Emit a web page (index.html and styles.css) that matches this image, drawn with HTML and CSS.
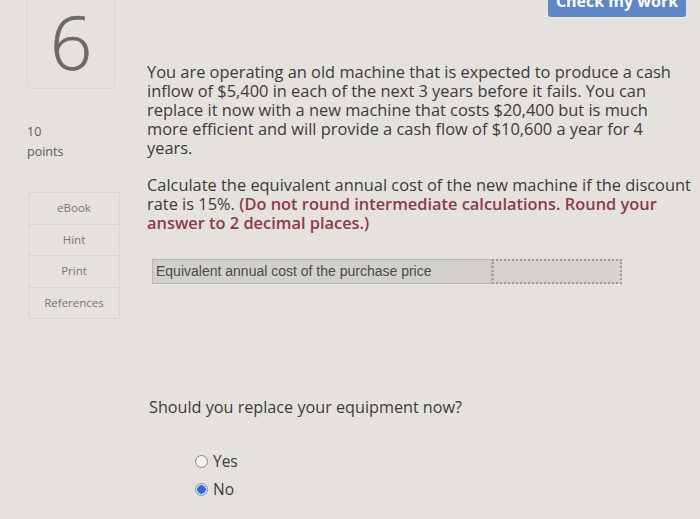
FILE: index.html
```html
<!DOCTYPE html>
<html lang="en">
<head>
<meta charset="utf-8">
<link rel="stylesheet" href="styles.css">
</head>
<body>
<div class="topbar">
  <button class="check-btn">Check my work</button>
</div>
<div class="page">
  <aside class="sidebar">
    <div class="qnum">6</div>
    <div class="points">
      <div class="points-val">10</div>
      <div class="points-lbl">points</div>
    </div>
    <ul class="tools">
      <li>eBook</li>
      <li>Hint</li>
      <li>Print</li>
      <li>References</li>
    </ul>
  </aside>
  <main class="content">
    <p class="para">You are operating an old machine that is expected to produce a cash inflow of $5,400 in each of the next 3 years before it fails. You can replace it now with a new machine that costs $20,400 but is much more efficient and will provide a cash flow of $10,600 a year for 4 years.</p>
    <p class="para">Calculate the equivalent annual cost of the new machine if the discount rate is 15%. <strong class="note">(Do not round intermediate calculations. Round your answer to 2 decimal places.)</strong></p>
    <div class="answer-row">
      <div class="answer-label">Equivalent annual cost of the purchase price</div>
      <div class="answer-input"></div>
    </div>
    <p class="question">Should you replace your equipment now?</p>
    <div class="options">
      <label class="opt"><span class="radio"></span>Yes</label>
      <label class="opt"><span class="radio checked"></span>No</label>
    </div>
  </main>
</div>
</body>
</html>
```

FILE: styles.css
```css
html, body {
  margin: 0;
  padding: 0;
}
body {
  width: 700px;
  height: 519px;
  overflow: hidden;
  background: #e5e2dd;
  font-family: "Open Sans", "Lato", sans-serif;
  color: #3b3b3b;
}
.topbar {
  display: flex;
  justify-content: flex-end;
  padding-right: 14px;
  height: 0;
}
.check-btn {
  margin-top: -16px;
  width: 138px;
  height: 33px;
  border: none;
  border-radius: 3px;
  background: #5d87c6;
  color: #fff;
  font-family: "Open Sans", sans-serif;
  font-weight: 700;
  font-size: 16px;
  line-height: 28px;
  padding: 0;
}
.page {
  display: flex;
}
.sidebar {
  width: 120px;
  flex: none;
  padding-left: 27px;
}
.qnum {
  width: 88px;
  height: 89px;
  box-sizing: border-box;
  border: 1px solid #d8d5d0;
  border-top: none;
  border-radius: 0 0 5px 5px;
  font-size: 74px;
  font-weight: 300;
  color: #6a6a6a;
  text-align: center;
  line-height: 80px;
  padding-top: 2px;
  -webkit-text-stroke: 0.6px #6a6a6a;
}
.points {
  margin-top: 33px;
  font-size: 12.5px;
  color: #5a5a5a;
  line-height: 20px;
}
.tools {
  list-style: none;
  margin: 30px 0 0 1px;
  padding: 0;
  width: 90px;
  border: 1px solid #d8d5d0;
  border-radius: 2px;
}
.tools li {
  height: 30.5px;
  line-height: 30.5px;
  text-align: center;
  font-size: 11.5px;
  color: #757575;
  border-bottom: 1px solid #d8d5d0;
}
.tools li:last-child {
  border-bottom: none;
}
.content {
  flex: 1;
  padding-top: 62px;
}
.para {
  margin: 0 0 18px 0;
  font-size: 16.4px;
  line-height: 19px;
  width: 545px;
}
.note {
  color: #8e3a48;
  font-weight: 600;
}
.answer-row {
  display: flex;
  margin: 27px 0 0 5px;
  width: 470px;
  height: 25px;
}
.answer-label {
  width: 340px;
  box-sizing: border-box;
  background: #d2d0cc;
  border: 1px solid #b8b6b2;
  font-family: "Liberation Sans", Arial, sans-serif;
  font-size: 14px;
  color: #4a4a4a;
  padding-left: 3px;
  line-height: 22px;
}
.answer-input {
  flex: 1;
  box-sizing: border-box;
  background: #d6d4d0;
  border: 2px dotted #9a9a9a;
}
.question {
  margin: 114px 0 0 2px;
  font-size: 16.2px;
  line-height: 19px;
}
.options {
  margin: 35px 0 0 48px;
  display: flex;
  flex-direction: column;
  gap: 9px;
}
.opt {
  display: flex;
  align-items: center;
  gap: 5px;
  font-size: 15.5px;
  line-height: 19px;
}
.radio {
  width: 11px;
  height: 11px;
  border-radius: 50%;
  border: 1px solid #8a8a8a;
  background: #f4f2ee;
}
.radio.checked {
  border: 1px solid #6f8fd8;
  background: radial-gradient(circle, #3565d4 0 4px, #dfe6f5 4.5px);
}
```
